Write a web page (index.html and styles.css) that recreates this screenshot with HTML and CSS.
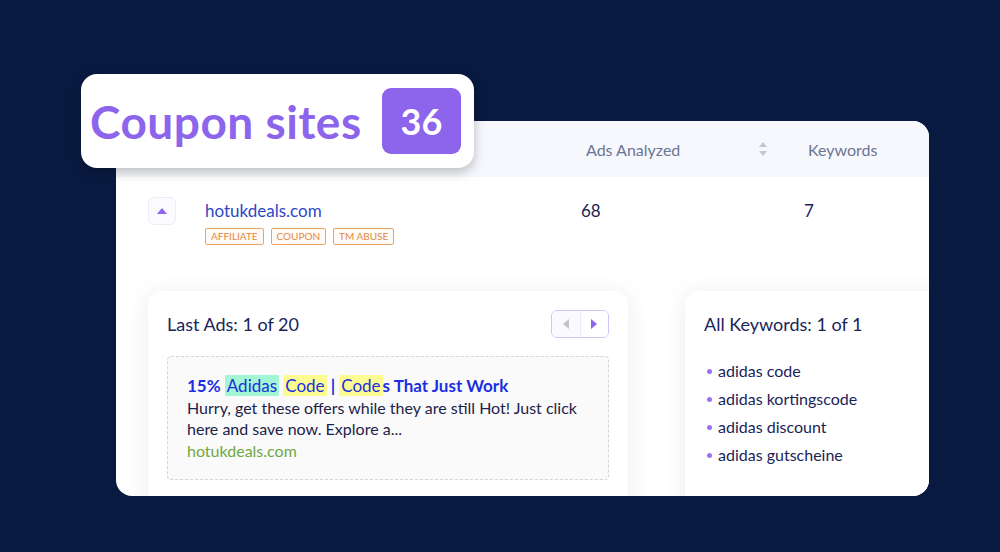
FILE: index.html
```html
<!DOCTYPE html>
<html lang="en">
<head>
    <meta charset="UTF-8">
    <meta name="viewport" content="width=device-width, initial-scale=1.0">
    <title>Coupon sites</title>
    <link rel="stylesheet" href="styles.css">
</head>
<body>
    <div class="stage">
        <div class="panel">
            <div class="table-head">
                <span class="col-ads">Ads Analyzed</span>
                <svg class="sort-icon" width="10" height="16" viewBox="0 0 10 16">
                    <path d="M5 1 L9 6 L1 6 Z" fill="#c3c7d2"/>
                    <path d="M5 15 L9 10 L1 10 Z" fill="#c3c7d2"/>
                </svg>
                <span class="col-kw">Keywords</span>
            </div>

            <div class="table-row">
                <button class="row-toggle">
                    <svg width="10" height="6" viewBox="0 0 10 6"><path d="M5 0 L10 6 L0 6 Z" fill="#8d64ec"/></svg>
                </button>
                <div class="site">
                    <div class="site-name">hotukdeals.com</div>
                    <div class="tags">
                        <span class="tag">AFFILIATE</span>
                        <span class="tag">COUPON</span>
                        <span class="tag">TM ABUSE</span>
                    </div>
                </div>
                <div class="val-ads">68</div>
                <div class="val-kw">7</div>
            </div>

            <div class="cards">
                <div class="card card-ads">
                    <div class="card-head">
                        <span class="card-title">Last Ads: 1 of 20</span>
                        <div class="pager">
                            <span class="pager-btn">
                                <svg width="6" height="10" viewBox="0 0 6 10"><path d="M6 0 L0 5 L6 10 Z" fill="#c2c4cc"/></svg>
                            </span>
                            <span class="pager-btn">
                                <svg width="6" height="10" viewBox="0 0 6 10"><path d="M0 0 L6 5 L0 10 Z" fill="#8d64ec"/></svg>
                            </span>
                        </div>
                    </div>
                    <div class="ad-box">
                        <div class="ad-title">15% <span class="hl hl-green">Adidas</span> <span class="hl hl-yellow">Code</span> | <span class="hl hl-yellow">Code</span>s That Just Work</div>
                        <div class="ad-desc">Hurry, get these offers while they are still Hot! Just click here and save now. Explore a...</div>
                        <div class="ad-url">hotukdeals.com</div>
                    </div>
                </div>

                <div class="card card-kw">
                    <div class="card-head">
                        <span class="card-title">All Keywords: 1 of 1</span>
                    </div>
                    <ul class="kw-list">
                        <li>adidas code</li>
                        <li>adidas kortingscode</li>
                        <li>adidas discount</li>
                        <li>adidas gutscheine</li>
                    </ul>
                </div>
            </div>
        </div>

        <div class="badge">
            <span class="badge-text">Coupon sites</span>
            <span class="badge-count">36</span>
        </div>
    </div>
</body>
</html>
```

FILE: styles.css
```css
* {
    box-sizing: border-box;
}
body {
    margin: 0;
    background-color: #091a41;
    font-family: Lato, "Open Sans", sans-serif;
    color: #1b2458;
    width: 1000px;
    height: 552px;
    overflow: hidden;
}
.stage {
    position: relative;
    padding: 121px 0 0 116px;
}
.panel {
    width: 813px;
    height: 375px;
    background-color: #fff;
    border-radius: 16px;
    overflow: hidden;
}
.table-head {
    height: 56px;
    background-color: #f6f8fd;
    display: flex;
    align-items: center;
    padding-left: 470px;
    color: #6b7594;
    font-size: 16px;
}
.col-ads {
    width: 172px;
}
.sort-icon {
    margin-right: 40px;
}
.table-row {
    display: flex;
    align-items: flex-start;
    padding: 20px 0 0 32px;
    height: 114px;
}
.row-toggle {
    width: 28px;
    height: 28px;
    padding: 0;
    border: 1px solid #ecebf7;
    border-radius: 6px;
    background-color: #fbfbfe;
    display: flex;
    align-items: center;
    justify-content: center;
    margin-right: 29px;
}
.site {
    width: 376px;
}
.site-name {
    font-size: 17px;
    line-height: 28px;
    color: #2f47c4;
}
.tags {
    display: flex;
    gap: 7px;
    margin-top: 3px;
}
.tag {
    border: 1px solid #e9a468;
    border-radius: 2px;
    color: #e08a45;
    background-color: #fffaf5;
    font-size: 10px;
    line-height: 15px;
    padding: 0 5px;
}
.val-ads,
.val-kw {
    font-size: 17px;
    line-height: 28px;
    color: #1b2458;
}
.val-ads {
    width: 223px;
}
.cards {
    display: flex;
    gap: 57px;
    padding-left: 32px;
}
.card {
    background-color: #fff;
    border-radius: 14px;
    box-shadow: 0 2px 22px rgba(30, 40, 90, 0.09);
    padding: 19px;
    height: 240px;
    flex-shrink: 0;
}
.card-ads {
    width: 480px;
}
.card-kw {
    width: 300px;
}
.card-head {
    display: flex;
    align-items: center;
    justify-content: space-between;
    height: 28px;
}
.card-title {
    font-size: 18px;
    color: #1b2458;
}
.pager {
    display: flex;
    width: 58px;
    height: 28px;
    border: 1px solid #cfc8f6;
    border-radius: 6px;
    overflow: hidden;
}
.pager-btn {
    flex: 1;
    display: flex;
    align-items: center;
    justify-content: center;
    background-color: #fafafe;
}
.pager-btn + .pager-btn {
    border-left: 1px solid #ebe9f6;
    background-color: #fff;
}
.ad-box {
    margin-top: 18px;
    height: 124px;
    border: 1px dashed #d3d4dc;
    border-radius: 4px;
    background-color: #fafafb;
    padding: 18px 19px;
    font-size: 16px;
    line-height: 21.5px;
}
.ad-title {
    font-size: 17px;
    font-weight: 700;
    color: #1b2fe0;
}
.hl {
    font-weight: 400;
    padding: 0 2px;
}
.hl-green {
    background-color: #a3f5d4;
}
.hl-yellow {
    background-color: #fdfc90;
}
.ad-desc {
    color: #1d2348;
}
.ad-url {
    color: #6fa83f;
}
.kw-list {
    list-style: none;
    margin: 19px 0 0;
    padding: 0 0 0 3px;
}
.kw-list li {
    font-size: 16px;
    line-height: 28px;
    color: #1b2458;
    display: flex;
    align-items: center;
}
.kw-list li::before {
    content: "";
    width: 5px;
    height: 5px;
    border-radius: 50%;
    background-color: #9a73ee;
    margin-right: 6px;
}
.badge {
    position: absolute;
    left: 81px;
    top: 74px;
    width: 393px;
    height: 94px;
    background-color: #fff;
    border-radius: 16px;
    box-shadow: 0 4px 12px rgba(0, 0, 0, 0.25);
    display: flex;
    align-items: center;
    justify-content: space-between;
    padding: 0 13px 0 9px;
}
.badge-text {
    font-size: 46px;
    font-weight: 700;
    color: #8d64ec;
    letter-spacing: 0.5px;
}
.badge-count {
    width: 79px;
    height: 66px;
    border-radius: 9px;
    background-color: #8d64ec;
    color: #fff;
    font-size: 36px;
    font-weight: 700;
    display: flex;
    align-items: center;
    justify-content: center;
}
```
